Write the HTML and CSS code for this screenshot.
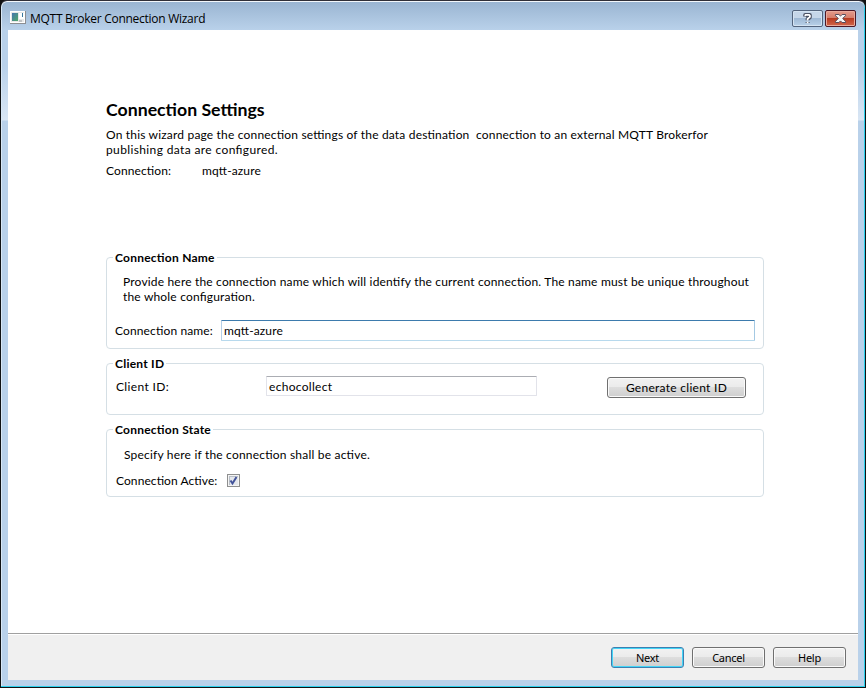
FILE: index.html
```html
<!DOCTYPE html>
<html lang="en">
<head>
<meta charset="utf-8">
<title>MQTT Broker Connection Wizard</title>
<link rel="stylesheet" href="styles.css">
</head>
<body>
<div class="window">
  <header class="titlebar">
    <svg class="app-icon" width="16" height="14" viewBox="0 0 16 14">
      <defs><linearGradient id="app" x1="0" y1="0" x2="1" y2="1"><stop offset="0" stop-color="#4575b0"/><stop offset="1" stop-color="#50a868"/></linearGradient></defs>
      <path fill="#8d8e91" d="M0 1h16v13H0z"/><path fill="#fff" d="M0 1h15v12H0z"/><path fill="#e8e8e8" d="M1 2h13v10H1z"/>
      <path fill="url(#app)" d="M2 3h6v8H2z"/><path fill="#fff" d="M9 3h5v6H9z"/><path fill="#3978a0" d="M12 3h1v4h-1z"/><path fill="#bfc3c5" d="M9 10h3v2H9z"/>
    </svg>
    <h1 class="caption">MQTT Broker Connection Wizard</h1>
    <div class="controls">
      <button class="control" aria-label="Help"><svg width="29" height="16" viewBox="0 0 29 16"><path d="M12.2 6.5V5h4.6v2.3l-2.2 1.6v1.4m0 1.7v1" fill="none" stroke="#4b5264" stroke-width="4" stroke-linejoin="round"/><path d="M11.8 5.8L12.7 4.8h3.4l.8 .8v1.3l-2.3 2v1.6m0 1.2v1.5" fill="none" stroke="#fff" stroke-width="1.8"/></svg></button>
      <button class="control close" aria-label="Close"><svg width="29" height="16" viewBox="0 0 29 16"><path d="M9.5 4.5h3.4l1.6 1.6 1.6-1.6h3.4v1.2l-2.8 2.8 2.8 2.8v1.2h-3.4l-1.6-1.6-1.6 1.6H9.5v-1.2l2.8-2.8-2.8-2.8z" fill="#f6f6f6" stroke="#554c5c"/></svg></button>
    </div>
  </header>
  <main class="page">
    <h2 class="heading">Connection Settings</h2>
    <p class="intro">On this wizard page the connection settings of the data destination&nbsp; connection to an external MQTT Brokerfor<br><span class="intro-end">publishing data are configured.</span></p>
    <div class="summary"><span class="summary-key">Connection:</span><span class="value">mqtt-azure</span></div>

    <fieldset class="group group-name">
      <legend>Connection Name</legend>
      <p class="hint">Provide here the connection name which will identify the current connection. The name must be unique throughout<br>the whole configuration.</p>
      <div class="name-row"><label class="name-label">Connection name:</label><div class="field focused"><span class="value">mqtt-azure</span></div></div>
    </fieldset>
    <fieldset class="group group-client">
      <legend>Client ID</legend>
      <div class="client-row"><label class="client-label">Client ID:</label><div class="field client-field">echocollect</div><button class="button generate">Generate client ID</button></div>
    </fieldset>
    <fieldset class="group group-state">
      <legend>Connection State</legend>
      <p class="hint state-hint">Specify here if the connection shall be active.</p>
      <div class="state-row"><label>Connection Active:</label><svg class="check" width="13" height="13" viewBox="0 0 13 13"><path fill="#8e8f8f" d="M0 0h13v13H0z"/><path fill="#f4f4f4" d="M1 1h11v11H1z"/><path fill="#b9bfc7" d="M2 2h9v9H2z"/><path fill="#e4e7ec" d="M3 3h8v8H3z"/><path d="M3.5 6.5l2 3L9.5 3" fill="none" stroke="#42539a" stroke-width="2"/></svg></div>
    </fieldset>
  </main>
  <footer class="footer">
    <button class="button default">Next</button>
    <button class="button">Cancel</button>
    <button class="button">Help</button>
  </footer>
</div>
</body>
</html>
```
FILE: styles.css
```css
* { box-sizing: border-box; }
body { margin: 0; background: #111; color: #000; font: 12px/15px Lato, sans-serif; font-feature-settings: "liga" 1; letter-spacing: 0.18px; }
h1, h2, p { margin: 0; font-weight: normal; white-space: nowrap; }
svg { display: block; }

.window {
  width: 866px; height: 688px; padding: 0 7px 7px; overflow: hidden;
  display: flex; flex-direction: column;
  border: 1px solid #101214; border-top-color: #302f38; border-radius: 7px 7px 0 0;
  background: linear-gradient(#99b4d1 0, #b9d1ea 29px, #b9d1ea 65px, #d9e6f4 119px, #b9d1ea 120px);
  box-shadow: inset 0 1px #f3f7fb, inset -1px -1px #2bd0ec, inset 1px 0 #d9e8f6;
}
.titlebar { flex: 0 0 29px; display: flex; align-items: flex-start; }
.app-icon { margin: 9px 0 0 2px; }
.caption { margin: 10px auto 0 4px; font: 12px/16px "Open Sans", sans-serif; letter-spacing: -0.27px; }
.controls { display: flex; gap: 2px; padding: 9px 2px 0 0; }
.control {
  width: 31px; height: 17px; padding: 0; overflow: hidden;
  border: 1px solid #53647d; border-radius: 2px;
  background: linear-gradient(#c5d6e9 0 45%, #9fb9d5 50%, #b9d1e9);
  box-shadow: inset 0 0 0 1px #d4e3f2;
}
.control svg { margin: -1px 0 0; }
.control.close { border-color: #4c1826; background: linear-gradient(#e49b8c 0, #d67f6d 45%, #b83b22 50%, #d2664a); box-shadow: inset 0 0 0 1px #e9aa9c; }

.page { flex: 1; padding: 70px 94px 0 98px; background: #fff; }
.heading { font: bold 17.7px/20px Lato, sans-serif; font-feature-settings: "liga" 1; letter-spacing: 0; }
.intro { margin-top: 7px; }
.intro-end { letter-spacing: 0.37px; }
.summary { display: flex; margin: 6px 0 72px; }
.summary-key { width: 96px; letter-spacing: 0.1px; }
.value { letter-spacing: 0.12px; }

.group { min-width: 0; margin: 0 0 7px; padding: 0 8px; border: 1px solid #d5dfe5; border-radius: 4px; }
.group legend { height: 15px; margin-left: -2px; padding: 0 2px; font-weight: bold; letter-spacing: 0.24px; }
.group-name { height: 99px; }
.group-client { height: 59px; }
.group-state { height: 75px; }
.hint { margin: 9px 0 0 8px; }
.state-hint { margin: 10px 0 0 9px; letter-spacing: 0.2px; }
.name-row { display: flex; margin-top: 16px; }
.name-label { width: 106px; padding-top: 3px; letter-spacing: 0.13px; }
.field { flex: 1; height: 21px; padding: 2px; border: 1px solid #e2e3ea; border-top-color: #abadb3; border-radius: 1px; background: #fff; line-height: 16px; }
.field.focused { border-color: #3d7bad #a4c9e3 #b7d9ed #b5cfe7; line-height: 15px; }
.client-row { display: flex; align-items: flex-start; padding: 5px 9px 0 1px; }
.client-label { width: 150px; padding-top: 3px; letter-spacing: 0.35px; }
.client-field { flex: 0 0 271px; height: 20px; letter-spacing: 0.3px; }
.state-row { display: flex; align-items: center; margin: 11px 0 0 1px; }
.state-row label { width: 111px; letter-spacing: 0.08px; }

.button {
  width: 73px; height: 21px; padding: 0; text-align: center;
  border: 1px solid #707070; border-radius: 3px; color: #000;
  background: linear-gradient(#f2f2f2, #ebebeb 48%, #dddddd 50%, #cfcfcf);
  box-shadow: inset 0 0 0 1px #fafafa;
  font: 11px/19px "Noto Sans", sans-serif; letter-spacing: -0.25px;
}
.button.generate { width: 139px; margin: 1px 0 0 auto; font: 12px/17px Lato, sans-serif; letter-spacing: 0.28px; }
.button.default { border-color: #3c7fb1; box-shadow: inset 0 0 0 1px #43d5f7; }
.footer { flex: 0 0 47px; display: flex; justify-content: flex-end; gap: 8px; padding: 13px 12px 0; border-top: 1px solid #a0a0a0; background: #f0f0f0; box-shadow: inset 0 1px #fff; }
```
